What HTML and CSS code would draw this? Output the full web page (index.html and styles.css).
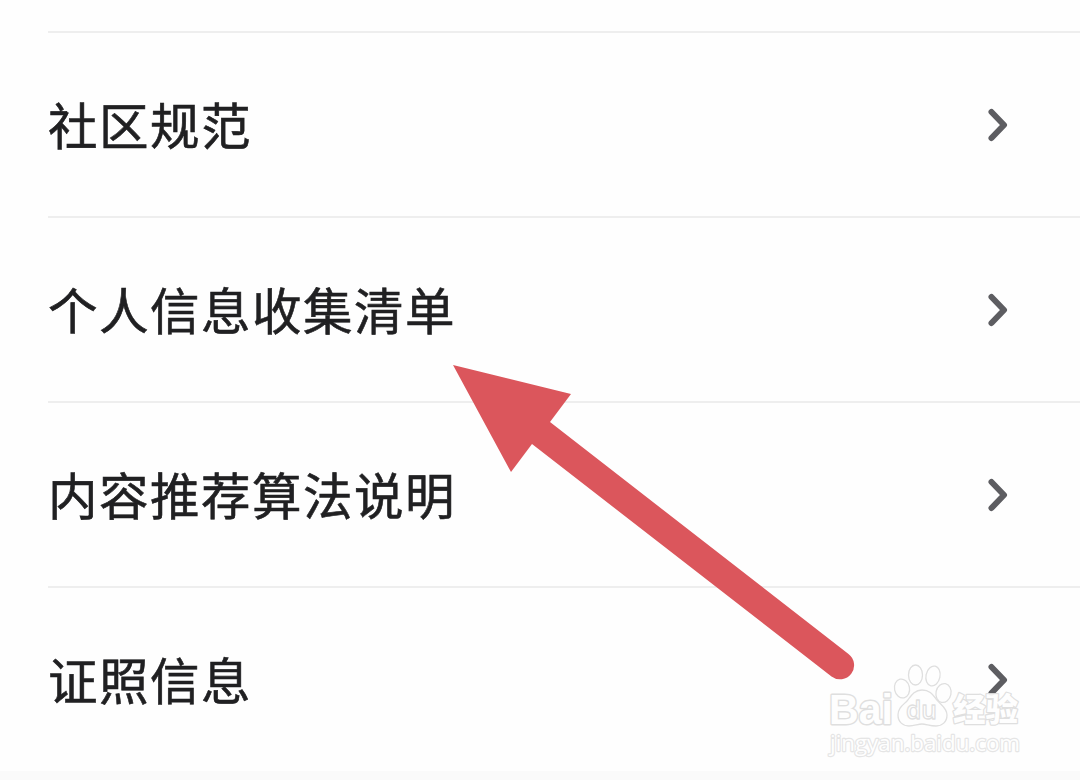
FILE: index.html
```html
<!DOCTYPE html>
<html lang="zh-CN">
<head>
<meta charset="utf-8">
<title>个人信息收集清单</title>
<link rel="stylesheet" href="styles.css">
</head>
<body>
<main class="screen">
  <ul class="list">
    <li class="row"><span class="label">社区规范</span><svg class="chevron" viewBox="0 0 24 36"><path d="M4.500 5L17 18L4.500 31"/></svg></li>
    <li class="row"><span class="label">个人信息收集清单</span><svg class="chevron" viewBox="0 0 24 36"><path d="M4.500 5L17 18L4.500 31"/></svg></li>
    <li class="row"><span class="label">内容推荐算法说明</span><svg class="chevron" viewBox="0 0 24 36"><path d="M4.500 5L17 18L4.500 31"/></svg></li>
    <li class="row"><span class="label">证照信息</span><svg class="chevron" viewBox="0 0 24 36"><path d="M4.500 5L17 18L4.500 31"/></svg></li>
  </ul>
  <div class="footer"></div>
  <svg class="arrow" viewBox="0 0 1080 780">
    <path d="M453 365L571 394L550 422L848.500 654A14 14 0 0 1 831.500 676.500L532 444L511 472Z"/>
  </svg>
  <svg class="watermark" viewBox="0 0 230 130">
    <g class="mark">
      <text class="brand" x="19" y="74" textLength="64" lengthAdjust="spacingAndGlyphs">Bai</text>
      <ellipse cx="92" cy="38.500" rx="7.500" ry="9.500" transform="rotate(-12 92 38.500)"/>
      <ellipse cx="105.500" cy="25" rx="7" ry="10"/>
      <ellipse cx="123" cy="26" rx="7" ry="10" transform="rotate(12 123 26)"/>
      <ellipse cx="133.500" cy="43" rx="7.500" ry="9.500" transform="rotate(12 133.500 43)"/>
      <path d="M112 40C104 40 101 46 97 51C93 55 88 58 88 65C88 72 93 76 99 76C104 76 108 74 112 74C116 74 120 76 126 76C132 76 137 72 137 65C137 58 131 55 127 50C123 45 120 40 112 40Z"/>
      <text class="du" x="96" y="69" textLength="31" lengthAdjust="spacingAndGlyphs">du</text>
      <text class="cn" x="143" y="71" textLength="65" lengthAdjust="spacingAndGlyphs">经验</text>
      <text class="url" x="20" y="100.500" textLength="190" lengthAdjust="spacingAndGlyphs">jingyan.baidu.com</text>
    </g>
  </svg>
</main>
</body>
</html>
```
FILE: styles.css
```css
body { margin: 0; background: #fefefe; }
.screen {
  position: relative;
  display: flex;
  flex-direction: column;
  box-sizing: border-box;
  width: 1080px;
  height: 780px;
  padding-top: 31px;
  overflow: hidden;
  font-family: "Noto Sans CJK SC", sans-serif;
}
.list { margin: 0; padding: 0 0 0 48px; list-style: none; }
.row {
  display: flex;
  align-items: center;
  justify-content: space-between;
  box-sizing: border-box;
  height: 185px;
  padding-right: 69px;
  border-top: 2px solid #eee;
}
.label {
  padding-bottom: 2px;
  color: #202022;
  font-size: 49.500px;
  line-height: 72px;
  letter-spacing: 1.500px;
  -webkit-text-stroke: 0.600px #202022;
}
.chevron {
  width: 24px;
  height: 36px;
  fill: none;
  stroke: #5d5d61;
  stroke-width: 6;
  stroke-linecap: round;
  stroke-linejoin: round;
}
.footer { flex: 1; background: #fafafa; }
.arrow { position: absolute; inset: 0; width: 1080px; height: 780px; fill: #db565c; }
.watermark { position: absolute; left: 810px; top: 650px; width: 230px; height: 130px; opacity: 0.95; }
.mark { fill: rgba(255, 255, 255, 0.5); stroke: #dedede; stroke-width: 1.300; stroke-linejoin: round; }
.brand { font: bold 43px "Liberation Sans", sans-serif; stroke-width: 3; paint-order: stroke; fill: #fff; }
.du { font: 600 26px "Open Sans", sans-serif; }
.cn { font: 900 32px "Noto Sans CJK SC", sans-serif; stroke-width: 2.500; paint-order: stroke; fill: #fff; }
.url { font: 22px "Open Sans", sans-serif; stroke: #e4e4e4; stroke-width: 2.300; paint-order: stroke; fill: #fff; }
```
